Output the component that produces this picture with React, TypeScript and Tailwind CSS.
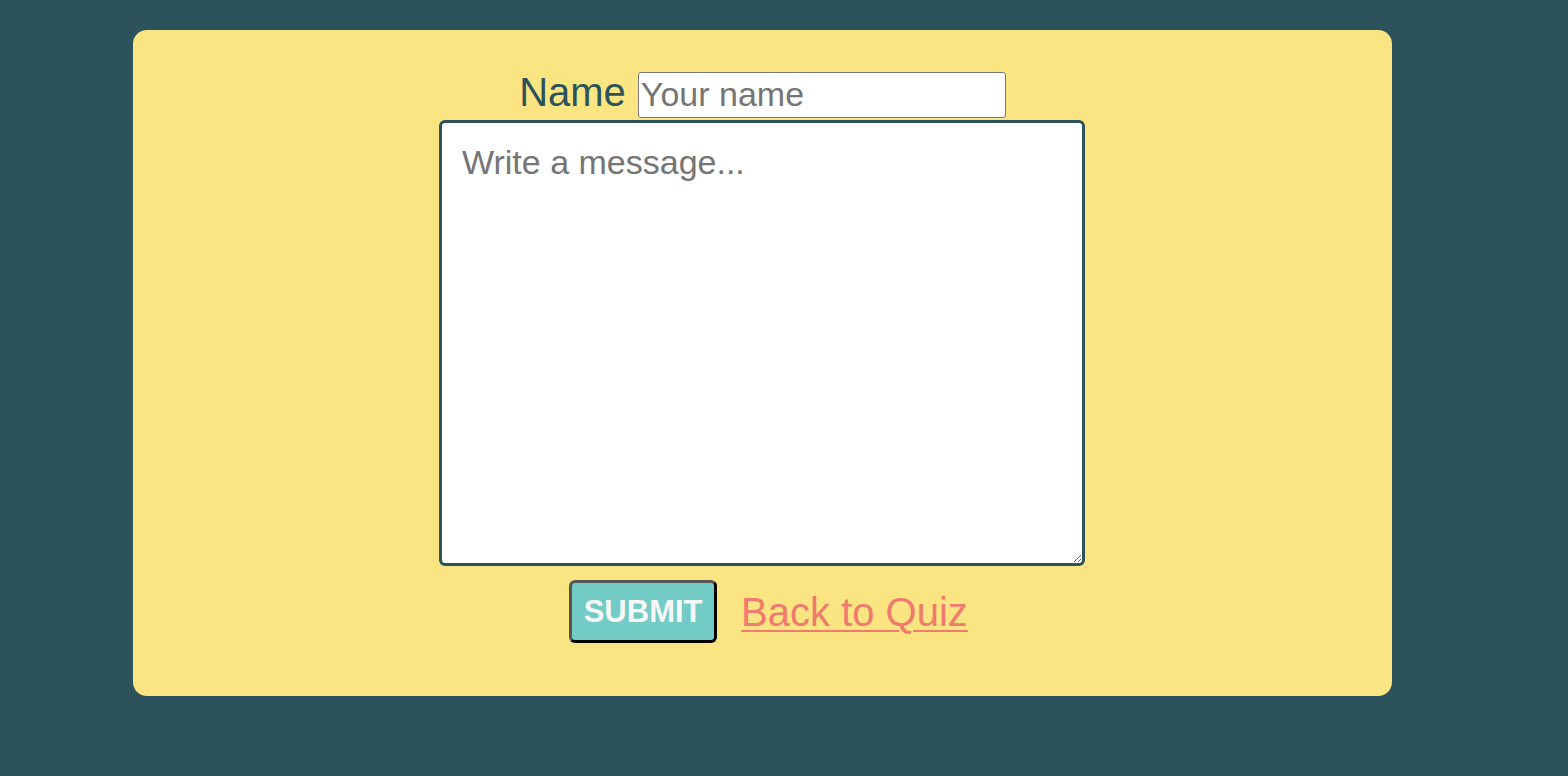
import React, { useState } from 'react';

const App = () => {
  const [name, setName] = useState('');
  const [message, setMessage] = useState('');

  return (
    <div className="min-h-screen w-full bg-[#2c535b] pt-[30px] font-['Liberation_Sans',Arial,sans-serif]">
      {/* Contact card */}
      <div className="ml-[133px] w-[1259px] h-[666px] rounded-[14px] bg-[#fbe583] pt-[39px] flex flex-col items-center">
        <div className="flex items-baseline gap-[12px] h-[46px]">
          <label htmlFor="name" className="text-[40px] leading-[46px] text-[#2c535b]">
            Name
          </label>
          <input
            id="name"
            type="text"
            value={name}
            onChange={(e) => setName(e.target.value)}
            placeholder="Your name"
            className="w-[368px] h-[46px] border border-[#767676] rounded-[3px] bg-white px-[2px] py-0 text-[34px] text-black placeholder:text-[#757575] outline-none"
          />
        </div>

        <textarea
          value={message}
          onChange={(e) => setMessage(e.target.value)}
          placeholder="Write a message..."
          className="mt-[5px] ml-[-1px] block w-[646px] h-[446px] border-[3px] border-[#2c535b] rounded-[6px] bg-white p-[20px] text-[34px] leading-[39px] text-black placeholder:text-[#757575] outline-none"
        />

        <div className="mt-[14px] flex items-center gap-[24px] pl-[12px]">
          <button className="h-[63px] w-[148px] rounded-[6px] border-[3px] border-t-[#555] border-l-[#555] border-b-black border-r-black bg-[#72cbc4] text-[31px] font-bold text-[#f7f7f7] leading-none">
            SUBMIT
          </button>
          <a href="#" className="text-[40px] leading-[40px] text-[#ef7a6d] underline underline-offset-[4px] decoration-[2px]">
            Back to Quiz
          </a>
        </div>
      </div>
    </div>
  );
};

export default App;
